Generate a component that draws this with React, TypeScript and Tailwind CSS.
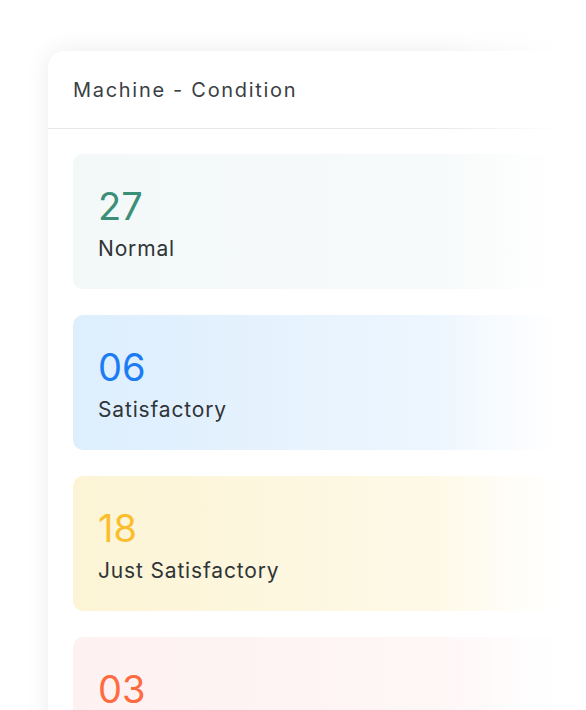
import React from 'react';

const items = [
    { value: '27', label: 'Normal', num: 'text-[#3b8f79]', bg: 'from-[#f3f8f8] to-[#f9fbfb]' },
    { value: '06', label: 'Satisfactory', num: 'text-[#1c7cf4]', bg: 'from-[#ddeefd] to-[#f6faff]' },
    { value: '18', label: 'Just Satisfactory', num: 'text-[#fbbd2b]', bg: 'from-[#fcf4d5] to-[#fffcf1]' },
    { value: '03', label: 'Unsatisfactory', num: 'text-[#ff6b40]', bg: 'from-[#fef1f1] to-[#fff9f9]' },
];

export default function App() {
    return (
        <div className="relative h-[710px] w-[586px] overflow-hidden bg-white font-['Inter',sans-serif]">
            <div className="ml-[48px] mt-[51px] w-[620px] rounded-2xl bg-white shadow-[0_0_24px_rgba(0,0,0,0.08)]">
                <div className="flex h-[78px] items-center border-b border-[#e6e8ea] px-[25px]">
                    <h2 className="text-[20px] tracking-[0.085em] text-[#3a3f44]">Machine - Condition</h2>
                </div>
                <div className="flex flex-col gap-[26px] px-[25px] pt-[25px] pb-10">
                    {items.map((it) => (
                        <div
                            key={it.value}
                            className={`h-[135px] rounded-[10px] bg-gradient-to-r ${it.bg} px-[25px] pt-[29px]`}
                        >
                            <div className={`text-[38px] leading-[46px] ${it.num}`}>{it.value}</div>
                            <div className="mt-[6px] text-[21px] leading-[28px] tracking-[0.04em] text-[#2f3437]">
                                {it.label}
                            </div>
                        </div>
                    ))}
                </div>
            </div>
            {/* fade out to white on the right edge */}
            <div className="pointer-events-none absolute inset-y-0 right-0 w-[150px] bg-[linear-gradient(to_right,rgba(255,255,255,0),#ffffff_82%)]" />
        </div>
    );
}
